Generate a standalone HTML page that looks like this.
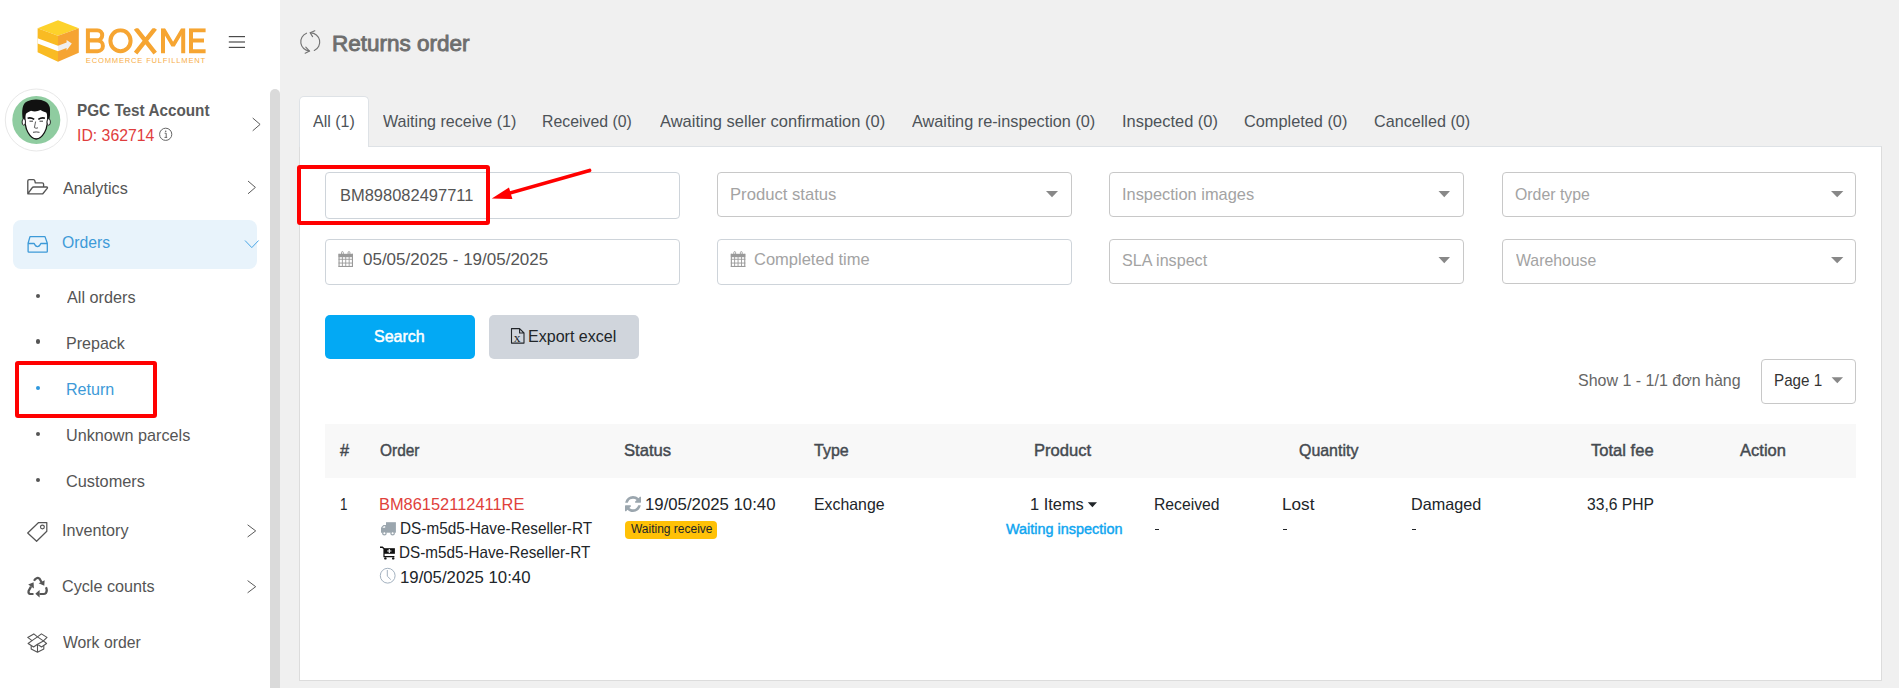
<!DOCTYPE html>
<html><head><meta charset="utf-8"><style>
html,body{margin:0;padding:0;}
body{width:1899px;height:688px;overflow:hidden;position:relative;background:#f0f0f0;font-family:'Liberation Sans',sans-serif;}
span{font-family:'Liberation Sans',sans-serif;}
</style></head><body>
<div style="position:absolute;left:0px;top:0px;width:280px;height:688px;background:#fff"></div>
<div style="position:absolute;left:270px;top:89px;width:10px;height:620px;background:#dadada;border-radius:5px"></div>
<svg style="position:absolute;left:30px;top:15px" width="180" height="52" viewBox="30 15 180 52"><defs><clipPath id="lc"><rect x="30" y="28.3" width="180" height="24.9"/><rect x="30" y="53" width="180" height="14"/><rect x="30" y="15" width="55" height="52"/></clipPath></defs><g clip-path="url(#lc)">
<polygon points="58,20.2 78.8,28.2 58,35.8 37.6,28.2" fill="#fdd22b"/>
<polygon points="37.6,28.2 58,35.8 58,61.8 37.6,52.2" fill="#f9bb23"/>
<polygon points="58,35.8 78.8,28.2 78.8,52.8 58,61.8" fill="#f6a432"/>
<polygon points="37.6,38.2 58,45.8 58,51.3 37.6,43.6" fill="#ffffff"/>
<polygon points="58,45.8 66.6,42.6 66.6,40 71.8,43.6 66.6,50.6 66.6,48 58,51.3" fill="#efefef"/>
<g fill="none" stroke="#f6a532" stroke-width="4">
<path d="M87.9,28.3 V53.2 M87.9,30.3 H97.2 A5,5 0 0 1 97.2,40.3 H87.9 M87.9,40.6 H97.6 A5.3,5.3 0 0 1 97.6,51.2 H87.9"/>
<ellipse cx="120.5" cy="40.75" rx="10.1" ry="10.45"/>
<path d="M135.6,28.3 L155.2,53.2 M155.2,28.3 L135.6,53.2" stroke-width="4.4"/>
<path d="M163,53.2 V28.3 M183.2,53.2 V28.3" />
<path d="M163.6,29.6 L173.1,45.4 L182.6,29.6" stroke-width="3.8" stroke-linejoin="bevel"/>
<path d="M191,28.3 V53.2 M189,30.3 H205.6 M189,40.6 H204 M189,51.2 H205.6"/>
</g>
<text x="85.8" y="62.9" font-family="Liberation Sans" font-size="7.6" fill="#f7ae48" textLength="119.4" lengthAdjust="spacing">ECOMMERCE FULFILLMENT</text>
</g></svg>
<svg style="position:absolute;left:226px;top:32px" width="22" height="20" viewBox="226 32 22 20"><g stroke="#4a4a4a" stroke-width="1.2"><line x1="228.8" y1="36.6" x2="245" y2="36.6"/><line x1="228.8" y1="42" x2="245" y2="42"/><line x1="228.8" y1="47.4" x2="245" y2="47.4"/></g></svg>
<svg style="position:absolute;left:0px;top:85px" width="75" height="72" viewBox="0 85 75 72">
<circle cx="36.3" cy="120" r="31" fill="#fff" stroke="#e8e8e8" stroke-width="1"/>
<circle cx="36.3" cy="120" r="24" fill="#8fcca0"/>
<path d="M24.6,109 Q24.2,127 28,132.5 Q31.5,138.6 36.2,139 Q41,138.6 44.5,132.5 Q48.3,127 47.9,109 Z" fill="#fff" stroke="#111" stroke-width="1.3"/>
<path d="M23,121 Q21.6,113 22.6,108 Q23.4,103 27.5,101.3 Q31,99.3 36,99.4 Q41.5,99.3 45.2,101.4 Q49.5,103.5 50,109 Q50.4,114 49.3,121 L47.4,120.5 Q47.6,114.5 46.2,112.5 Q42,111 40.5,110 Q36,112.3 31,110.8 Q27.5,112.6 26.2,113.5 Q25,115 25.2,120.5 Z" fill="#111"/>
<ellipse cx="23.8" cy="122" rx="1.7" ry="3.2" fill="#fff" stroke="#111" stroke-width="0.9"/>
<ellipse cx="48.7" cy="122" rx="1.7" ry="3.2" fill="#fff" stroke="#111" stroke-width="0.9"/>
<path d="M27.6,118.2 Q31,117.2 34.2,119.4 M38.3,119.4 Q41.5,117.2 44.9,118.2" stroke="#111" stroke-width="1.6" fill="none"/>
<path d="M29.5,121.2 H33 M39.5,121.2 H43" stroke="#222" stroke-width="0.9"/>
<path d="M35.6,121.5 L34.4,127.6 Q36,128.8 38,127.8" stroke="#333" stroke-width="0.8" fill="none"/>
<path d="M33,132.3 Q36.2,131.6 39.5,132.3" stroke="#333" stroke-width="0.9" fill="none"/>
</svg>
<svg style="position:absolute;left:157px;top:126px" width="18" height="17" viewBox="157 126 18 17"><circle cx="165.7" cy="134.3" r="6.1" fill="none" stroke="#666" stroke-width="1"/><circle cx="165.7" cy="131.2" r="0.8" fill="#666"/><path d="M164.6,133.2 L166.2,133.2 L166.2,137.3 M164.5,137.4 L167.2,137.4" stroke="#666" stroke-width="1" fill="none"/></svg>
<svg style="position:absolute;left:250px;top:116px" width="12" height="17" viewBox="250 116 12 17"><path d="M252.7,118 L260.1,124.4 L252.7,130.8" fill="none" stroke="#5a5a5a" stroke-width="1"/></svg>
<svg style="position:absolute;left:246px;top:179px" width="12" height="17" viewBox="246 179 12 17"><path d="M248,181 L255.4,187.4 L248,193.8" fill="none" stroke="#5a5a5a" stroke-width="1"/></svg>
<svg style="position:absolute;left:245px;top:522px" width="13" height="17" viewBox="245 522 13 17"><path d="M247.6,524.8 L255.7,530.9 L247.6,537" fill="none" stroke="#5a5a5a" stroke-width="1"/></svg>
<svg style="position:absolute;left:245px;top:578px" width="13" height="17" viewBox="245 578 13 17"><path d="M247.6,580.6 L255.7,586.7 L247.6,592.8" fill="none" stroke="#5a5a5a" stroke-width="1"/></svg>
<div style="position:absolute;left:13px;top:220px;width:244px;height:48.6px;background:#e8f3fb;border-radius:8px"></div>
<svg style="position:absolute;left:243px;top:238px" width="18" height="12" viewBox="243 238 18 12"><path d="M245,240.5 L251.8,247.6 L258.6,240.5" fill="none" stroke="#49a6e6" stroke-width="1"/></svg>
<svg style="position:absolute;left:24px;top:176px" width="28" height="22" viewBox="24 176 28 22"><path d="M27.8,193.8 V181 Q27.8,179.6 29.2,179.6 H33.4 Q34.6,179.6 34.9,181 L35.3,182.8 H42.2 Q43.6,182.8 43.6,184.2 V187 M27.8,193.8 L32,188 Q32.6,187 33.8,187 H46.6 Q48,187.2 47.2,188.4 L42.8,193.8 Z" fill="none" stroke="#555" stroke-width="1.35" stroke-linejoin="round"/></svg>
<svg style="position:absolute;left:25px;top:233px" width="26" height="22" viewBox="25 233 26 22"><path d="M30,236.6 H45 L47.3,243.3 V251.4 Q47.3,252.2 46.5,252.2 H28.9 Q28.1,252.2 28.1,251.4 V243.3 Z M28.1,243.5 H34.2 Q35.5,246.6 37.5,246.6 Q39.5,246.6 40.8,243.5 H47.3" fill="none" stroke="#3d9ad8" stroke-width="1.3" stroke-linejoin="round"/></svg>
<div style="position:absolute;left:35.5px;top:294.0px;width:4.2px;height:4.2px;border-radius:50%;background:#555"></div>
<div style="position:absolute;left:35.5px;top:339.4px;width:4.2px;height:4.2px;border-radius:50%;background:#555"></div>
<div style="position:absolute;left:35.5px;top:385.9px;width:4.2px;height:4.2px;border-radius:50%;background:#2f98dd"></div>
<div style="position:absolute;left:35.5px;top:431.7px;width:4.2px;height:4.2px;border-radius:50%;background:#555"></div>
<div style="position:absolute;left:35.5px;top:477.7px;width:4.2px;height:4.2px;border-radius:50%;background:#555"></div>
<svg style="position:absolute;left:24px;top:519px" width="27" height="26" viewBox="24 519 27 26"><path d="M38.6,522.5 H46.8 V531.3 L36.6,541.3 L27.7,533 Z" fill="none" stroke="#555" stroke-width="1.25" stroke-linejoin="round"/><circle cx="42.4" cy="527" r="1.9" fill="none" stroke="#555" stroke-width="1.2"/></svg>
<svg style="position:absolute;left:24px;top:573px" width="27" height="26" viewBox="24 573 27 26"><g stroke="#555" stroke-width="2.2" fill="none" stroke-linecap="butt">
<path d="M34,580.8 Q36.5,576.6 39.5,578.6 L41.6,582.2"/>
<path d="M33.5,594 H30 Q28,593.4 28.6,591 L31,586.6"/>
<path d="M46,587.2 Q47.6,590.5 46,593 Q45,594 43.6,594 H39.5"/>
</g>
<g fill="#555"><polygon points="38.6,583.3 44.6,580.2 44.3,585.8"/><polygon points="28.2,584.4 33.6,582.3 33.9,588.4"/><polygon points="39.6,590 39.6,597.4 35.3,593.7"/></g></svg>
<svg style="position:absolute;left:24px;top:630px" width="27" height="26" viewBox="24 630 27 26"><g stroke="#555" stroke-width="1.1" fill="none" stroke-linejoin="round">
<path d="M33.8,633.9 L27.7,637.4 L32,640.6 L37.5,636.9 Z"/>
<path d="M41.4,633.9 L37.5,636.9 L43.4,640.9 L47,637.4 Z"/>
<path d="M32,640.6 L28.1,643.5 L33.6,647 L37.5,644.3 L43.4,640.9 L46.6,643.5 L41.5,647 L37.5,644.3"/>
<path d="M31.2,645.4 V648.9 L37.5,652.2 L43.8,648.9 V645.4 M37.5,644.3 V652.2"/>
</g></svg>
<div style="position:absolute;left:15.3px;top:361.3px;width:141.9px;height:57px;box-sizing:border-box;border:4.2px solid #ff0000;border-radius:3px"></div>
<svg style="position:absolute;left:296px;top:27px" width="30" height="30" viewBox="296 27 30 30"><g fill="none" stroke="#747474" stroke-width="1.15" stroke-linecap="round"><path d="M306.5,33.2 A9.2,9.2 0 0 0 309.2,50.9"/><path d="M305.8,47.2 L309.4,51 L305.2,53.2"/><path d="M314.3,50.5 A9.2,9.2 0 0 0 310.6,32.9"/><path d="M312.6,36.6 L310.2,32.7 L314.8,30.8"/></g></svg>
<div style="position:absolute;left:299px;top:146px;width:1583px;height:535px;box-sizing:border-box;background:#fff;border:1px solid #dcdcdc;border-top-color:#dee2e6"></div>
<div style="position:absolute;left:299px;top:96px;width:70px;height:51px;box-sizing:border-box;background:#fff;border:1px solid #dee2e6;border-bottom:none;border-radius:5px 5px 0 0"></div>
<div style="position:absolute;left:325px;top:172px;width:355px;height:47px;box-sizing:border-box;border:1px solid #ced4da;border-radius:4px;background:#fff"></div>
<div style="position:absolute;left:717px;top:172px;width:355px;height:45px;box-sizing:border-box;border:1px solid #c8c8c8;border-radius:4px;background:#fff"></div>
<div style="position:absolute;left:1109px;top:172px;width:355px;height:45px;box-sizing:border-box;border:1px solid #c8c8c8;border-radius:4px;background:#fff"></div>
<div style="position:absolute;left:1502px;top:172px;width:354px;height:45px;box-sizing:border-box;border:1px solid #c8c8c8;border-radius:4px;background:#fff"></div>
<div style="position:absolute;left:325px;top:239px;width:355px;height:46px;box-sizing:border-box;border:1px solid #ced4da;border-radius:4px;background:#fff"></div>
<div style="position:absolute;left:717px;top:239px;width:355px;height:46px;box-sizing:border-box;border:1px solid #ced4da;border-radius:4px;background:#fff"></div>
<div style="position:absolute;left:1109px;top:239px;width:355px;height:45px;box-sizing:border-box;border:1px solid #c8c8c8;border-radius:4px;background:#fff"></div>
<div style="position:absolute;left:1502px;top:239px;width:354px;height:45px;box-sizing:border-box;border:1px solid #c8c8c8;border-radius:4px;background:#fff"></div>
<svg style="position:absolute;left:1045px;top:190px" width="15" height="9" viewBox="1045 190 15 9"><polygon points="1046,191 1058,191 1052.0,197.2" fill="#888"/></svg>
<svg style="position:absolute;left:1437px;top:190px" width="14" height="9" viewBox="1437 190 14 9"><polygon points="1438.5,191 1450,191 1444.25,197.2" fill="#888"/></svg>
<svg style="position:absolute;left:1830px;top:190px" width="15" height="9" viewBox="1830 190 15 9"><polygon points="1831,191 1843.4,191 1837.2,197.2" fill="#888"/></svg>
<svg style="position:absolute;left:1437px;top:256px" width="14" height="9" viewBox="1437 256 14 9"><polygon points="1438.5,257 1450,257 1444.25,263.2" fill="#888"/></svg>
<svg style="position:absolute;left:1830px;top:256px" width="15" height="9" viewBox="1830 256 15 9"><polygon points="1831,257 1843.4,257 1837.2,263.2" fill="#888"/></svg>
<svg style="position:absolute;left:337px;top:250px" width="18" height="19" viewBox="337 250 18 19"><g fill="#9a9a9a"><rect x="338.5" y="253.79999999999998" width="14.5" height="3.4"/>
<rect x="338.5" y="253.79999999999998" width="1.1" height="13.2"/><rect x="351.9" y="253.79999999999998" width="1.1" height="13.2"/>
<rect x="338.5" y="265.9" width="14.5" height="1.1"/><rect x="338.5" y="258.8" width="14.5" height="0.9"/><rect x="338.5" y="262.59999999999997" width="14.5" height="0.9"/>
<rect x="341.9" y="256.2" width="0.9" height="10"/><rect x="345.3" y="256.2" width="0.9" height="10"/><rect x="348.7" y="256.2" width="0.9" height="10"/>
</g><g fill="none" stroke="#9a9a9a" stroke-width="0.9"><rect x="341.5" y="251.6" width="1.8" height="3.8" rx="0.9"/><rect x="348.1" y="251.6" width="1.8" height="3.8" rx="0.9"/></g></svg>
<svg style="position:absolute;left:729px;top:250px" width="18" height="19" viewBox="729 250 18 19"><g fill="#9a9a9a"><rect x="730.8" y="253.79999999999998" width="14.5" height="3.4"/>
<rect x="730.8" y="253.79999999999998" width="1.1" height="13.2"/><rect x="744.1999999999999" y="253.79999999999998" width="1.1" height="13.2"/>
<rect x="730.8" y="265.9" width="14.5" height="1.1"/><rect x="730.8" y="258.8" width="14.5" height="0.9"/><rect x="730.8" y="262.59999999999997" width="14.5" height="0.9"/>
<rect x="734.1999999999999" y="256.2" width="0.9" height="10"/><rect x="737.5999999999999" y="256.2" width="0.9" height="10"/><rect x="741.0" y="256.2" width="0.9" height="10"/>
</g><g fill="none" stroke="#9a9a9a" stroke-width="0.9"><rect x="733.8" y="251.6" width="1.8" height="3.8" rx="0.9"/><rect x="740.4" y="251.6" width="1.8" height="3.8" rx="0.9"/></g></svg>
<div style="position:absolute;left:325px;top:315px;width:150px;height:44px;background:#03a9f4;border-radius:5px"></div>
<div style="position:absolute;left:489px;top:315px;width:150px;height:44px;background:#d0d5dc;border-radius:5px"></div>
<svg style="position:absolute;left:508px;top:326px" width="19" height="20" viewBox="508 326 19 20"><path d="M511.5,328.6 H519.6 L524,333 V343.1 H511.5 Z M519.6,328.6 V333 H524" fill="none" stroke="#212529" stroke-width="1.1" stroke-linejoin="round"/><text x="513.7" y="341.9" font-family="Liberation Serif" font-size="13.5" fill="#212529">x</text></svg>
<div style="position:absolute;left:1761px;top:359px;width:95px;height:45px;box-sizing:border-box;border:1px solid #c8c8c8;border-radius:4px;background:#fff"></div>
<svg style="position:absolute;left:1830px;top:376px" width="14" height="9" viewBox="1830 376 14 9"><polygon points="1831.6,377.2 1843,377.2 1837.3,383.2" fill="#888"/></svg>
<div style="position:absolute;left:297.3px;top:164.6px;width:193.2px;height:60.2px;box-sizing:border-box;border:4px solid #ff0000;border-radius:3px"></div>
<svg style="position:absolute;left:488px;top:165px" width="106" height="38" viewBox="488 165 106 38"><line x1="589.6" y1="170.4" x2="508" y2="193.6" stroke="#ff0000" stroke-width="3.6" stroke-linecap="round"/><polygon points="491.8,198.6 509,187.4 512.4,199" fill="#ff0000"/></svg>
<div style="position:absolute;left:325px;top:424px;width:1531px;height:54px;background:#f8f8f8"></div>
<svg style="position:absolute;left:623px;top:494px" width="20" height="20" viewBox="623 494 20 20"><path transform="translate(625,496) scale(0.01042)" d="M1511 928q0 5-1 7-64 268-268 434.5T764 1536q-146 0-282.5-55T238 1324l-129 129q-19 19-45 19t-45-19-19-45V960q0-26 19-45t45-19h448q26 0 45 19t19 45-19 45l-137 137q71 66 161 102t187 36q134 0 250-65t186-179q11-17 53-117 8-23 30-23h192q13 0 22.5 9.5t9.5 22.5zm25-800v448q0 26-19 45t-45 19h-448q-26 0-45-19t-19-45 19-45l138-138Q969 256 768 256q-134 0-250 65T332 500q-11 17-53 117-8 23-30 23H50q-13 0-22.5-9.5T18 608v-7q65-268 270-434.5T768 0q146 0 284 55.5T1297 212l130-129q19-19 45-19t45 19 19 45z" fill="#9ba6ae"/></svg>
<div style="position:absolute;left:625.3px;top:521.2px;width:91.5px;height:17.5px;background:#ffc107;border-radius:4px"></div>
<svg style="position:absolute;left:1086px;top:501px" width="12" height="8" viewBox="1086 501 12 8"><polygon points="1087.8,502.2 1097,502.2 1092.4,507.2" fill="#212529"/></svg>
<svg style="position:absolute;left:379px;top:520px" width="19" height="17" viewBox="379 520 19 17"><g fill="#9ba6ae"><rect x="386" y="522.2" width="9.9" height="10.5"/><path d="M381,532.7 V527.6 L383.4,524.9 H386.2 V532.7 Z"/></g><path d="M382.4,527.8 L383.8,526.2 H385.2 V527.8 Z" fill="#fff"/><circle cx="384.4" cy="533.2" r="1.7" fill="#fff" stroke="#9ba6ae" stroke-width="1.3"/><circle cx="392.6" cy="533.2" r="1.7" fill="#fff" stroke="#9ba6ae" stroke-width="1.3"/></svg>
<svg style="position:absolute;left:379px;top:545px" width="18" height="16" viewBox="379 545 18 16"><g fill="#111"><path d="M380,546.6 H382.6 L384.6,548.2 V556 H394.4 V557.2 H383.4 V549 L382.2,547.9 H380 Z"/><rect x="384" y="548.2" width="10.9" height="5.6"/><circle cx="385.4" cy="558.4" r="1.2"/><circle cx="393.2" cy="558.4" r="1.2"/></g><path d="M389.3,548.9 V553.1 M387.2,551 H391.4" stroke="#fff" stroke-width="1.1"/></svg>
<svg style="position:absolute;left:379px;top:567px" width="18" height="18" viewBox="379 567 18 18"><circle cx="387.7" cy="575.7" r="7.4" fill="none" stroke="#a3b1bf" stroke-width="1"/><path d="M387.3,570 V576.2 L390.8,579.6" fill="none" stroke="#a3b1bf" stroke-width="1"/></svg>
<div style="position:absolute;left:1155.3px;top:528.6px;width:4.2px;height:1.3px;background:#212529"></div>
<div style="position:absolute;left:1283.3px;top:528.6px;width:4.2px;height:1.3px;background:#212529"></div>
<div style="position:absolute;left:1411.8px;top:528.6px;width:4.2px;height:1.3px;background:#212529"></div>
<span style="position:absolute;left:76.97px;top:102.00px;font-size:16.5px;font-weight:bold;color:#5a5a5a;line-height:1;white-space:nowrap;transform:scaleX(0.9268);transform-origin:0 0;">PGC Test Account</span>
<span style="position:absolute;left:77.06px;top:128.00px;font-size:16.8px;font-weight:normal;color:#df3d3d;line-height:1;white-space:nowrap;transform:scaleX(0.9420);transform-origin:0 0;">ID: 362714</span>
<span style="position:absolute;left:62.80px;top:180.00px;font-size:17px;font-weight:normal;color:#555555;line-height:1;white-space:nowrap;transform:scaleX(0.9515);transform-origin:0 0;">Analytics</span>
<span style="position:absolute;left:61.87px;top:234.00px;font-size:17px;font-weight:normal;color:#3d9ad8;line-height:1;white-space:nowrap;transform:scaleX(0.9255);transform-origin:0 0;">Orders</span>
<span style="position:absolute;left:67.00px;top:289.00px;font-size:17px;font-weight:normal;color:#555555;line-height:1;white-space:nowrap;transform:scaleX(0.9549);transform-origin:0 0;">All orders</span>
<span style="position:absolute;left:66.06px;top:335.00px;font-size:17px;font-weight:normal;color:#555555;line-height:1;white-space:nowrap;transform:scaleX(0.9443);transform-origin:0 0;">Prepack</span>
<span style="position:absolute;left:66.05px;top:381.00px;font-size:17px;font-weight:normal;color:#3d9ad8;line-height:1;white-space:nowrap;transform:scaleX(0.9469);transform-origin:0 0;">Return</span>
<span style="position:absolute;left:66.05px;top:427.00px;font-size:17px;font-weight:normal;color:#555555;line-height:1;white-space:nowrap;transform:scaleX(0.9527);transform-origin:0 0;">Unknown parcels</span>
<span style="position:absolute;left:66.04px;top:473.00px;font-size:17px;font-weight:normal;color:#555555;line-height:1;white-space:nowrap;transform:scaleX(0.9605);transform-origin:0 0;">Customers</span>
<span style="position:absolute;left:61.75px;top:522.00px;font-size:17px;font-weight:normal;color:#555555;line-height:1;white-space:nowrap;transform:scaleX(0.9507);transform-origin:0 0;">Inventory</span>
<span style="position:absolute;left:61.75px;top:578.00px;font-size:17px;font-weight:normal;color:#555555;line-height:1;white-space:nowrap;transform:scaleX(0.9521);transform-origin:0 0;">Cycle counts</span>
<span style="position:absolute;left:62.70px;top:634.00px;font-size:17px;font-weight:normal;color:#555555;line-height:1;white-space:nowrap;transform:scaleX(0.9274);transform-origin:0 0;">Work order</span>
<span style="position:absolute;left:331.71px;top:33.00px;font-size:22.6px;font-weight:normal;color:#6e6e6e;line-height:1;white-space:nowrap;transform:scaleX(0.9949);transform-origin:0 0;-webkit-text-stroke:0.9px #6e6e6e">Returns order</span>
<span style="position:absolute;left:312.80px;top:113.00px;font-size:17px;font-weight:normal;color:#4d5358;line-height:1;white-space:nowrap;transform:scaleX(0.9409);transform-origin:0 0;">All (1)</span>
<span style="position:absolute;left:382.50px;top:113.00px;font-size:17px;font-weight:normal;color:#4d5358;line-height:1;white-space:nowrap;transform:scaleX(0.9457);transform-origin:0 0;">Waiting receive (1)</span>
<span style="position:absolute;left:542.27px;top:113.00px;font-size:17px;font-weight:normal;color:#4d5358;line-height:1;white-space:nowrap;transform:scaleX(0.9316);transform-origin:0 0;">Received (0)</span>
<span style="position:absolute;left:659.60px;top:113.00px;font-size:17px;font-weight:normal;color:#4d5358;line-height:1;white-space:nowrap;transform:scaleX(0.9701);transform-origin:0 0;">Awaiting seller confirmation (0)</span>
<span style="position:absolute;left:911.80px;top:113.00px;font-size:17px;font-weight:normal;color:#4d5358;line-height:1;white-space:nowrap;transform:scaleX(0.9571);transform-origin:0 0;">Awaiting re-inspection (0)</span>
<span style="position:absolute;left:1122.33px;top:113.00px;font-size:17px;font-weight:normal;color:#4d5358;line-height:1;white-space:nowrap;transform:scaleX(0.9670);transform-origin:0 0;">Inspected (0)</span>
<span style="position:absolute;left:1244.34px;top:113.00px;font-size:17px;font-weight:normal;color:#4d5358;line-height:1;white-space:nowrap;transform:scaleX(0.9594);transform-origin:0 0;">Completed (0)</span>
<span style="position:absolute;left:1374.15px;top:113.00px;font-size:17px;font-weight:normal;color:#4d5358;line-height:1;white-space:nowrap;transform:scaleX(0.9515);transform-origin:0 0;">Cancelled (0)</span>
<span style="position:absolute;left:340.23px;top:187.00px;font-size:17px;font-weight:normal;color:#555555;line-height:1;white-space:nowrap;transform:scaleX(0.9691);transform-origin:0 0;">BM898082497711</span>
<span style="position:absolute;left:730.02px;top:186.00px;font-size:17px;font-weight:normal;color:#a3a3a3;line-height:1;white-space:nowrap;transform:scaleX(0.9785);transform-origin:0 0;">Product status</span>
<span style="position:absolute;left:1122.44px;top:186.00px;font-size:17px;font-weight:normal;color:#a3a3a3;line-height:1;white-space:nowrap;transform:scaleX(0.9640);transform-origin:0 0;">Inspection images</span>
<span style="position:absolute;left:1514.77px;top:186.00px;font-size:17px;font-weight:normal;color:#a3a3a3;line-height:1;white-space:nowrap;transform:scaleX(0.9316);transform-origin:0 0;">Order type</span>
<span style="position:absolute;left:362.60px;top:251.00px;font-size:17px;font-weight:normal;color:#555555;line-height:1;white-space:nowrap;transform:scaleX(0.9995);transform-origin:0 0;">05/05/2025 - 19/05/2025</span>
<span style="position:absolute;left:754.23px;top:251.00px;font-size:17px;font-weight:normal;color:#a3a3a3;line-height:1;white-space:nowrap;transform:scaleX(0.9709);transform-origin:0 0;">Completed time</span>
<span style="position:absolute;left:1122.45px;top:252.00px;font-size:17px;font-weight:normal;color:#a3a3a3;line-height:1;white-space:nowrap;transform:scaleX(0.9483);transform-origin:0 0;">SLA inspect</span>
<span style="position:absolute;left:1515.70px;top:252.00px;font-size:17px;font-weight:normal;color:#a3a3a3;line-height:1;white-space:nowrap;transform:scaleX(0.9302);transform-origin:0 0;">Warehouse</span>
<span style="position:absolute;left:374.36px;top:328.00px;font-size:17px;font-weight:normal;color:#ffffff;line-height:1;white-space:nowrap;transform:scaleX(0.9423);transform-origin:0 0;-webkit-text-stroke:0.5px #ffffff">Search</span>
<span style="position:absolute;left:528.46px;top:328.00px;font-size:17px;font-weight:normal;color:#212529;line-height:1;white-space:nowrap;transform:scaleX(0.9446);transform-origin:0 0;">Export excel</span>
<span style="position:absolute;left:1577.86px;top:372.00px;font-size:17px;font-weight:normal;color:#666666;line-height:1;white-space:nowrap;transform:scaleX(0.9415);transform-origin:0 0;">Show 1 - 1/1 đơn hàng</span>
<span style="position:absolute;left:1774.11px;top:372.00px;font-size:17px;font-weight:normal;color:#333333;line-height:1;white-space:nowrap;transform:scaleX(0.8942);transform-origin:0 0;">Page 1</span>
<span style="position:absolute;left:340.00px;top:442.00px;font-size:17px;font-weight:normal;color:#454a50;line-height:1;white-space:nowrap;transform:scaleX(0.9600);transform-origin:0 0;-webkit-text-stroke:0.45px #454a50">#</span>
<span style="position:absolute;left:380.00px;top:442.00px;font-size:17px;font-weight:normal;color:#454a50;line-height:1;white-space:nowrap;transform:scaleX(0.9091);transform-origin:0 0;-webkit-text-stroke:0.45px #454a50">Order</span>
<span style="position:absolute;left:624.02px;top:442.00px;font-size:17px;font-weight:normal;color:#454a50;line-height:1;white-space:nowrap;transform:scaleX(0.9787);transform-origin:0 0;-webkit-text-stroke:0.45px #454a50">Status</span>
<span style="position:absolute;left:814.20px;top:442.00px;font-size:17px;font-weight:normal;color:#454a50;line-height:1;white-space:nowrap;transform:scaleX(0.9405);transform-origin:0 0;-webkit-text-stroke:0.45px #454a50">Type</span>
<span style="position:absolute;left:1034.42px;top:442.00px;font-size:17px;font-weight:normal;color:#454a50;line-height:1;white-space:nowrap;transform:scaleX(0.9759);transform-origin:0 0;-webkit-text-stroke:0.45px #454a50">Product</span>
<span style="position:absolute;left:1298.60px;top:442.00px;font-size:17px;font-weight:normal;color:#454a50;line-height:1;white-space:nowrap;transform:scaleX(0.9375);transform-origin:0 0;-webkit-text-stroke:0.45px #454a50">Quantity</span>
<span style="position:absolute;left:1590.80px;top:442.00px;font-size:17px;font-weight:normal;color:#454a50;line-height:1;white-space:nowrap;transform:scaleX(0.9750);transform-origin:0 0;-webkit-text-stroke:0.45px #454a50">Total fee</span>
<span style="position:absolute;left:1739.50px;top:442.00px;font-size:17px;font-weight:normal;color:#454a50;line-height:1;white-space:nowrap;transform:scaleX(0.9723);transform-origin:0 0;-webkit-text-stroke:0.45px #454a50">Action</span>
<span style="position:absolute;left:340.19px;top:496.00px;font-size:16.5px;font-weight:normal;color:#212529;line-height:1;white-space:nowrap;transform:scaleX(0.8125);transform-origin:0 0;">1</span>
<span style="position:absolute;left:379.41px;top:496.00px;font-size:16.5px;font-weight:normal;color:#e0403a;line-height:1;white-space:nowrap;transform:scaleX(0.9945);transform-origin:0 0;">BM86152112411RE</span>
<span style="position:absolute;left:644.98px;top:496.00px;font-size:16.5px;font-weight:normal;color:#212529;line-height:1;white-space:nowrap;transform:scaleX(1.0157);transform-origin:0 0;">19/05/2025 10:40</span>
<span style="position:absolute;left:813.54px;top:496.00px;font-size:16.5px;font-weight:normal;color:#212529;line-height:1;white-space:nowrap;transform:scaleX(0.9611);transform-origin:0 0;">Exchange</span>
<span style="position:absolute;left:1029.81px;top:496.00px;font-size:16.5px;font-weight:normal;color:#212529;line-height:1;white-space:nowrap;transform:scaleX(0.9943);transform-origin:0 0;">1 Items</span>
<span style="position:absolute;left:1154.05px;top:496.00px;font-size:16.5px;font-weight:normal;color:#212529;line-height:1;white-space:nowrap;transform:scaleX(0.9522);transform-origin:0 0;">Received</span>
<span style="position:absolute;left:1281.96px;top:496.00px;font-size:16.5px;font-weight:normal;color:#212529;line-height:1;white-space:nowrap;transform:scaleX(1.0400);transform-origin:0 0;">Lost</span>
<span style="position:absolute;left:1410.52px;top:496.00px;font-size:16.5px;font-weight:normal;color:#212529;line-height:1;white-space:nowrap;transform:scaleX(0.9814);transform-origin:0 0;">Damaged</span>
<span style="position:absolute;left:1586.65px;top:496.00px;font-size:16.5px;font-weight:normal;color:#212529;line-height:1;white-space:nowrap;transform:scaleX(0.9478);transform-origin:0 0;">33,6 PHP</span>
<span style="position:absolute;left:399.57px;top:520.00px;font-size:16.5px;font-weight:normal;color:#212529;line-height:1;white-space:nowrap;transform:scaleX(0.9282);transform-origin:0 0;">DS-m5d5-Have-Reseller-RT</span>
<span style="position:absolute;left:630.50px;top:523.00px;font-size:12.5px;font-weight:normal;color:#212529;line-height:1;white-space:nowrap;transform:scaleX(0.9588);transform-origin:0 0;">Waiting receive</span>
<span style="position:absolute;left:1005.50px;top:522.00px;font-size:14px;font-weight:normal;color:#0ea5f0;line-height:1;white-space:nowrap;transform:scaleX(1.0310);transform-origin:0 0;-webkit-text-stroke:0.4px #0ea5f0">Waiting inspection</span>
<span style="position:absolute;left:398.68px;top:544.00px;font-size:16.5px;font-weight:normal;color:#212529;line-height:1;white-space:nowrap;transform:scaleX(0.9243);transform-origin:0 0;">DS-m5d5-Have-Reseller-RT</span>
<span style="position:absolute;left:399.78px;top:569.00px;font-size:16.5px;font-weight:normal;color:#212529;line-height:1;white-space:nowrap;transform:scaleX(1.0157);transform-origin:0 0;">19/05/2025 10:40</span>
</body></html>
